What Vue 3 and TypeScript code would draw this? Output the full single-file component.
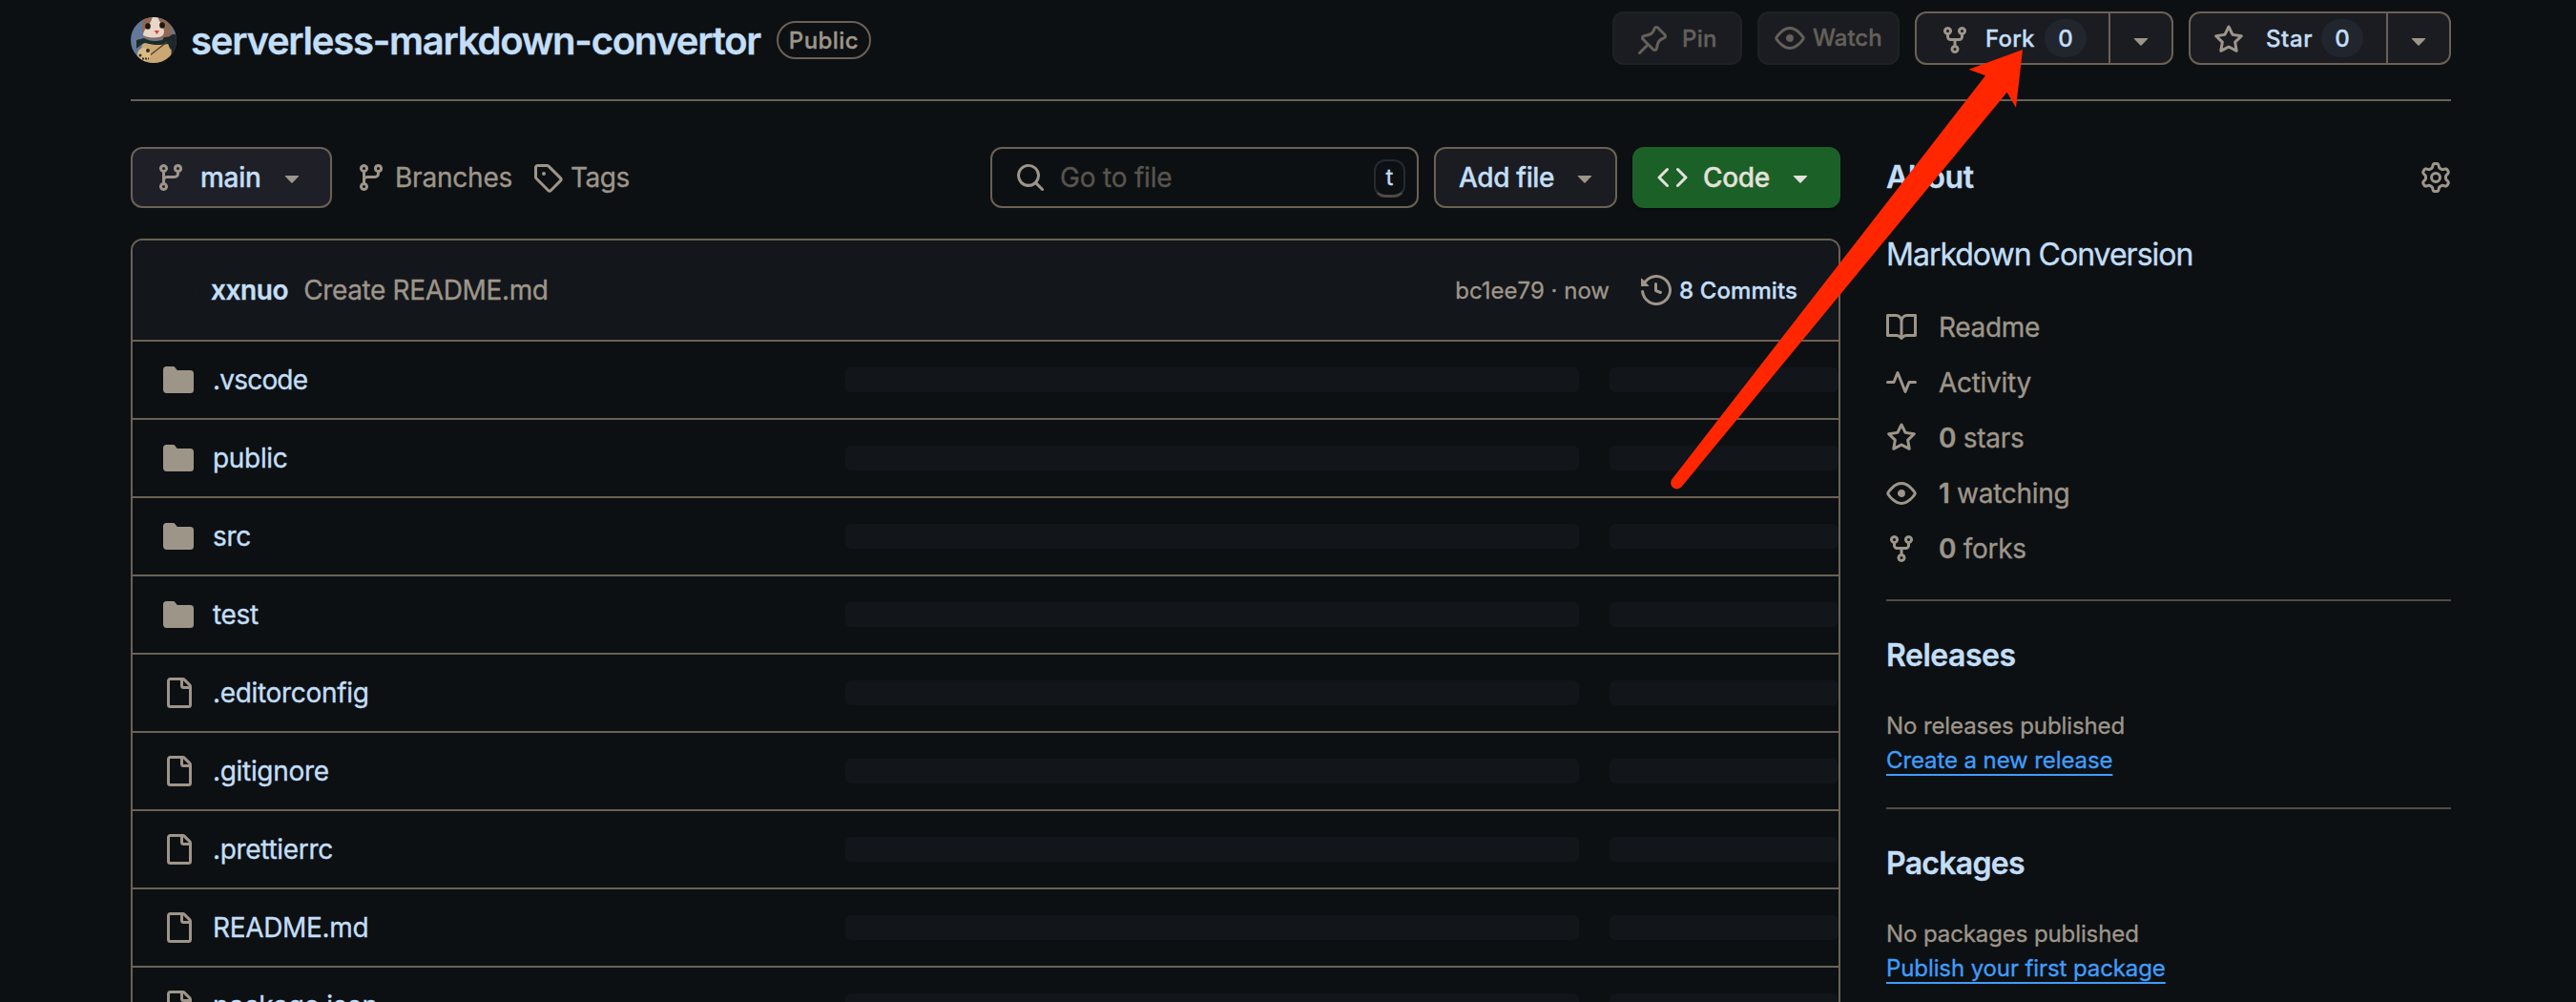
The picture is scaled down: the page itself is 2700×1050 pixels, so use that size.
<script setup lang="ts">
import { h, type FunctionalComponent } from 'vue'

const glyphs = {
  branch:
    'M9.5 3.25a2.25 2.25 0 1 1 3 2.122V6A2.5 2.5 0 0 1 10 8.5H6a1 1 0 0 0-1 1v1.128a2.251 2.251 0 1 1-1.5 0V5.372a2.25 2.25 0 1 1 1.5 0v1.836A2.493 2.493 0 0 1 6 7h4a1 1 0 0 0 1-1v-.628A2.25 2.25 0 0 1 9.5 3.25Zm-6 0a.75.75 0 1 0 1.5 0 .75.75 0 0 0-1.5 0Zm8.25-.75a.75.75 0 1 0 0 1.5.75.75 0 0 0 0-1.5ZM4.25 12a.75.75 0 1 0 0 1.5.75.75 0 0 0 0-1.5Z',
  tag:
    'M1 7.775V2.75C1 1.784 1.784 1 2.75 1h5.025c.464 0 .91.184 1.238.513l6.25 6.25a1.75 1.75 0 0 1 0 2.474l-5.026 5.026a1.75 1.75 0 0 1-2.474 0l-6.25-6.25A1.752 1.752 0 0 1 1 7.775Zm1.5 0c0 .066.026.13.073.177l6.25 6.25a.25.25 0 0 0 .354 0l5.025-5.025a.25.25 0 0 0 0-.354l-6.25-6.25a.25.25 0 0 0-.177-.073H2.75a.25.25 0 0 0-.25.25ZM6 5a1 1 0 1 1 0 2 1 1 0 0 1 0-2Z',
  search:
    'M10.68 11.74a6 6 0 0 1-7.922-8.982 6 6 0 0 1 8.982 7.922l3.04 3.04a.749.749 0 0 1-.326 1.275.749.749 0 0 1-.734-.215ZM11.5 7a4.499 4.499 0 1 0-8.997 0A4.499 4.499 0 0 0 11.5 7Z',
  caret:
    'm4.427 7.427 3.396 3.396a.25.25 0 0 0 .354 0l3.396-3.396A.25.25 0 0 0 11.396 7H4.604a.25.25 0 0 0-.177.427Z',
  code:
    'm11.28 3.22 4.25 4.25a.75.75 0 0 1 0 1.06l-4.25 4.25a.749.749 0 0 1-1.275-.326.749.749 0 0 1 .215-.734L13.94 8l-3.72-3.72a.749.749 0 0 1 .326-1.275.749.749 0 0 1 .734.215Zm-6.56 0a.751.751 0 0 1 1.042.018.751.751 0 0 1 .018 1.042L2.06 8l3.72 3.72a.749.749 0 0 1-.326 1.275.749.749 0 0 1-.734-.215L.47 8.53a.75.75 0 0 1 0-1.06Z',
  history:
    'm.427 1.927 1.215 1.215a8.002 8.002 0 1 1-1.6 5.685.75.75 0 1 1 1.493-.154 6.5 6.5 0 1 0 1.18-4.458l1.358 1.358A.25.25 0 0 1 3.896 6H.25A.25.25 0 0 1 0 5.75V2.104a.25.25 0 0 1 .427-.177ZM7.75 4a.75.75 0 0 1 .75.75v2.992l2.028.812a.75.75 0 0 1-.557 1.392l-2.5-1A.751.751 0 0 1 7 8.25v-3.5A.75.75 0 0 1 7.75 4Z',
  book:
    'M0 1.75A.75.75 0 0 1 .75 1h4.253c1.227 0 2.317.59 3 1.501A3.743 3.743 0 0 1 11.006 1h4.245a.75.75 0 0 1 .75.75v10.5a.75.75 0 0 1-.75.75h-4.507a2.25 2.25 0 0 0-1.591.659l-.622.621a.75.75 0 0 1-1.06 0l-.622-.621A2.25 2.25 0 0 0 5.258 13H.75a.75.75 0 0 1-.75-.75Zm7.251 10.324.004-5.073-.002-2.253A2.25 2.25 0 0 0 5.003 2.5H1.5v9h3.757a3.75 3.75 0 0 1 1.994.574ZM8.755 4.75l-.004 7.322a3.752 3.752 0 0 1 1.992-.572H14.5v-9h-3.495a2.25 2.25 0 0 0-2.25 2.25Z',
  pulse:
    'M6 2c.306 0 .582.187.696.471L10 10.731l1.304-3.26A.751.751 0 0 1 12 7h3.25a.75.75 0 0 1 0 1.5h-2.742l-1.812 4.528a.751.751 0 0 1-1.392 0L6 4.77 4.696 8.03A.75.75 0 0 1 4 8.5H.75a.75.75 0 0 1 0-1.5h2.742l1.812-4.529A.751.751 0 0 1 6 2Z',
  star:
    'M8 .25a.75.75 0 0 1 .673.418l1.882 3.815 4.21.612a.75.75 0 0 1 .416 1.279l-3.046 2.97.719 4.192a.751.751 0 0 1-1.088.791L8 12.347l-3.766 1.98a.75.75 0 0 1-1.088-.79l.72-4.194L.818 6.374a.75.75 0 0 1 .416-1.28l4.21-.611L7.327.668A.75.75 0 0 1 8 .25Zm0 2.445L6.615 5.5a.75.75 0 0 1-.564.41l-3.097.45 2.24 2.184a.75.75 0 0 1 .216.664l-.528 3.084 2.769-1.456a.75.75 0 0 1 .698 0l2.77 1.456-.53-3.084a.75.75 0 0 1 .216-.664l2.24-2.183-3.096-.45a.75.75 0 0 1-.564-.41L8 2.694Z',
  eye:
    'M8 2c1.981 0 3.671.992 4.933 2.078 1.27 1.091 2.187 2.345 2.637 3.023a1.62 1.62 0 0 1 0 1.798c-.45.678-1.367 1.932-2.637 3.023C11.67 13.008 9.981 14 8 14c-1.981 0-3.671-.992-4.933-2.078C1.797 10.83.88 9.576.43 8.898a1.62 1.62 0 0 1 0-1.798c.45-.677 1.367-1.931 2.637-3.022C4.33 2.992 6.019 2 8 2ZM1.679 7.932a.12.12 0 0 0 0 .136c.411.622 1.241 1.75 2.366 2.717C5.176 11.758 6.527 12.5 8 12.5c1.473 0 2.825-.742 3.955-1.715 1.124-.967 1.954-2.096 2.366-2.717a.12.12 0 0 0 0-.136c-.412-.621-1.242-1.75-2.366-2.717C10.824 4.242 9.473 3.5 8 3.5c-1.473 0-2.825.742-3.955 1.715-1.124.967-1.954 2.096-2.366 2.717ZM8 10a2 2 0 1 1-.001-3.999A2 2 0 0 1 8 10Z',
  fork:
    'M5 5.372v.878c0 .414.336.75.75.75h4.5a.75.75 0 0 0 .75-.75v-.878a2.25 2.25 0 1 1 1.5 0v.878a2.25 2.25 0 0 1-2.25 2.25h-1.5v2.128a2.251 2.251 0 1 1-1.5 0V8.5h-1.5A2.25 2.25 0 0 1 3.5 6.25v-.878a2.25 2.25 0 1 1 1.5 0ZM5 3.25a.75.75 0 1 0-1.5 0 .75.75 0 0 0 1.5 0Zm6.75.75a.75.75 0 1 0 0-1.5.75.75 0 0 0 0 1.5Zm-3 8.75a.75.75 0 1 0-1.5 0 .75.75 0 0 0 1.5 0Z',
  pin:
    'm11.294.984 3.722 3.722a1.75 1.75 0 0 1-.504 2.826l-1.327.613a3.089 3.089 0 0 0-1.707 2.084l-.584 2.454c-.317 1.332-1.972 1.8-2.94.832L5.75 11.311 1.78 15.28a.749.749 0 1 1-1.06-1.06l3.969-3.97-2.204-2.204c-.968-.968-.5-2.623.832-2.94l2.454-.584a3.08 3.08 0 0 0 2.084-1.707l.613-1.327a1.75 1.75 0 0 1 2.826-.504ZM6.283 9.723l2.732 2.731a.25.25 0 0 0 .42-.119l.584-2.454a4.586 4.586 0 0 1 2.537-3.098l1.328-.613a.25.25 0 0 0 .072-.404l-3.722-3.722a.25.25 0 0 0-.404.072l-.613 1.328a4.584 4.584 0 0 1-3.098 2.537l-2.454.584a.25.25 0 0 0-.119.42l2.731 2.732Z',
  file:
    'M2 1.75C2 .784 2.784 0 3.75 0h6.586c.464 0 .909.184 1.237.513l2.914 2.914c.329.328.513.773.513 1.237v9.586A1.75 1.75 0 0 1 13.25 16h-9.5A1.75 1.75 0 0 1 2 14.25Zm1.75-.25a.25.25 0 0 0-.25.25v12.5c0 .138.112.25.25.25h9.5a.25.25 0 0 0 .25-.25V6h-2.75A1.75 1.75 0 0 1 9 4.25V1.5Zm6.75.062V4.25c0 .138.112.25.25.25h2.688l-.011-.013-2.914-2.914-.013-.011Z',
  folder:
    'M1.75 1A1.75 1.75 0 0 0 0 2.75v10.5C0 14.216.784 15 1.75 15h12.5A1.75 1.75 0 0 0 16 13.25v-8.5A1.75 1.75 0 0 0 14.25 3H7.5a.25.25 0 0 1-.2-.1l-.9-1.2C6.07 1.26 5.55 1 5 1H1.75Z',
  gear:
    'M8 0a8.2 8.2 0 0 1 .701.031C9.444.095 9.99.645 10.16 1.29l.288 1.107c.018.066.079.158.212.224.231.114.454.243.668.386.123.082.233.09.299.071l1.103-.303c.644-.176 1.392.021 1.82.63.27.385.506.792.704 1.218.315.675.111 1.422-.364 1.891l-.814.806c-.049.048-.098.147-.088.294.016.257.016.515 0 .772-.01.147.038.246.088.294l.814.806c.475.469.679 1.216.364 1.891a7.977 7.977 0 0 1-.704 1.217c-.428.61-1.176.807-1.82.63l-1.102-.302c-.067-.019-.177-.011-.3.071a5.909 5.909 0 0 1-.668.386c-.133.066-.194.158-.211.224l-.29 1.106c-.168.646-.715 1.196-1.458 1.26a8.006 8.006 0 0 1-1.402 0c-.743-.064-1.289-.614-1.458-1.26l-.289-1.106c-.018-.066-.079-.158-.212-.224a5.738 5.738 0 0 1-.668-.386c-.123-.082-.233-.09-.299-.071l-1.103.303c-.644.176-1.392-.021-1.82-.63a8.12 8.12 0 0 1-.704-1.218c-.315-.675-.111-1.422.363-1.891l.815-.806c.05-.048.098-.147.088-.294a6.214 6.214 0 0 1 0-.772c.01-.147-.038-.246-.088-.294l-.815-.806C.635 6.045.431 5.298.746 4.623a7.92 7.92 0 0 1 .704-1.217c.428-.61 1.176-.807 1.82-.63l1.102.302c.067.019.177.011.3-.071.214-.143.437-.272.668-.386.133-.066.194-.158.211-.224l.29-1.106C6.009.645 6.556.095 7.299.03 7.53.01 7.764 0 8 0Zm-.571 1.525c-.036.003-.108.036-.137.146l-.289 1.105c-.147.561-.549.967-.998 1.189-.173.086-.34.183-.5.29-.417.278-.97.423-1.529.27l-1.103-.303c-.109-.03-.175.016-.195.045-.22.312-.412.644-.573.99-.014.031-.021.11.059.19l.815.806c.411.406.562.957.53 1.456a4.709 4.709 0 0 0 0 .582c.032.499-.119 1.05-.53 1.456l-.815.806c-.081.08-.073.159-.059.19.162.346.353.677.573.989.02.03.085.076.195.046l1.102-.303c.56-.153 1.113-.008 1.53.27.161.107.328.204.501.29.447.222.85.629.997 1.189l.289 1.105c.029.109.101.143.137.146a6.6 6.6 0 0 0 1.142 0c.036-.003.108-.036.137-.146l.289-1.105c.147-.561.549-.967.998-1.189.173-.086.34-.183.5-.29.417-.278.97-.423 1.529-.27l1.103.303c.109.029.175-.016.195-.045.22-.313.411-.644.573-.99.014-.031.021-.11-.059-.19l-.815-.806c-.411-.406-.562-.957-.53-1.456a4.709 4.709 0 0 0 0-.582c-.032-.499.119-1.05.53-1.456l.815-.806c.081-.08.073-.159.059-.19a6.464 6.464 0 0 0-.573-.989c-.02-.03-.085-.076-.195-.046l-1.102.303c-.56.153-1.113.008-1.53-.27a4.44 4.44 0 0 0-.501-.29c-.447-.222-.85-.629-.997-1.189l-.289-1.105c-.029-.11-.101-.143-.137-.146a6.6 6.6 0 0 0-1.142 0ZM11 8a3 3 0 1 1-6 0 3 3 0 0 1 6 0ZM9.5 8a1.5 1.5 0 1 0-3.001.001A1.5 1.5 0 0 0 9.5 8Z',
} as const

type Glyph = keyof typeof glyphs

const Icon: FunctionalComponent<{ name: Glyph }> = (props) =>
  h('svg', { width: 32, height: 32, viewBox: '0 0 16 16', fill: 'currentColor', 'aria-hidden': 'true' }, [
    h('path', { d: glyphs[props.name] }),
  ])
Icon.props = ['name']

interface Entry {
  name: string
  kind: 'folder' | 'file'
}

const entries: Entry[] = [
  { name: '.vscode', kind: 'folder' },
  { name: 'public', kind: 'folder' },
  { name: 'src', kind: 'folder' },
  { name: 'test', kind: 'folder' },
  { name: '.editorconfig', kind: 'file' },
  { name: '.gitignore', kind: 'file' },
  { name: '.prettierrc', kind: 'file' },
  { name: 'README.md', kind: 'file' },
  { name: 'package.json', kind: 'file' },
]

interface Fact {
  icon: Glyph
  count?: number
  label: string
}

const facts: Fact[] = [
  { icon: 'book', label: 'Readme' },
  { icon: 'pulse', label: 'Activity' },
  { icon: 'star', count: 0, label: 'stars' },
  { icon: 'eye', count: 1, label: 'watching' },
  { icon: 'fork', count: 0, label: 'forks' },
]

const sections = [
  { title: 'Releases', note: 'No releases published', link: 'Create a new release' },
  { title: 'Packages', note: 'No packages published', link: 'Publish your first package' },
]
</script>

<template>
  <div class="page">
    <header class="repo-head">
      <div class="repo-title">
        <svg class="avatar" width="48" height="48" viewBox="0 0 48 48">
          <defs>
            <clipPath id="avatar-clip"><circle cx="24" cy="24" r="24" /></clipPath>
          </defs>
          <g clip-path="url(#avatar-clip)">
            <rect width="48" height="48" fill="#64799a" />
            <path d="M34 18h14v30H34z" fill="#20242a" />
            <path d="M13 26c-3 8-3 16 1 22h26c4-8 3-17 0-22z" fill="#c9a873" />
            <path d="M6 24l8-2c7 4 15 4 24 0l8 4-4 8c-2-2-2-5-3-6-8 2-17 1-24-1-4 1-6 4-9 6z" fill="#1c2a29" />
            <path d="M13-1h23c2 6 8 10 8 18-2 3-5 4-8 4-6 3-15 3-22 0-2-3-3-14-1-22z" fill="#8d6a55" />
            <path d="M23-1h5c1 5 5 8 6 12 2 5 1 9-5 10-6 1-13 0-16-2 0-7 8-10 10-20z" fill="#e8d6c8" />
            <ellipse cx="18" cy="9.500" rx="2.800" ry="3.200" fill="#24140f" />
            <ellipse cx="33" cy="8.500" rx="2.800" ry="3.200" fill="#24140f" />
            <path d="M24.500 14h5.500l-2.500 4z" fill="#d8404a" />
            <path d="M38 26L20 40" stroke="#4c3a26" stroke-width="1.200" />
            <circle cx="14" cy="39" r="7" fill="#dabb82" />
            <circle cx="18" cy="35" r="2" fill="#33291f" />
            <circle cx="10" cy="40" r="1.500" fill="#33291f" />
            <path d="M12 43.500h7" stroke="#33291f" stroke-width="2" stroke-dasharray="2 1" />
          </g>
        </svg>
        <h1>serverless-markdown-convertor</h1>
        <span class="pill">Public</span>
      </div>
      <div class="actions">
        <button class="btn disabled pin"><Icon name="pin" class="low" /><span>Pin</span></button>
        <button class="btn disabled watch"><Icon name="eye" /><span>Watch</span></button>
        <div class="group fork">
          <button class="group-main"><Icon name="fork" class="low" /><span>Fork</span><b class="counter">0</b></button>
          <button class="group-caret"><Icon name="caret" class="low" /></button>
        </div>
        <div class="group star">
          <button class="group-main"><Icon name="star" class="low" /><span>Star</span><b class="counter">0</b></button>
          <button class="group-caret"><Icon name="caret" class="low" /></button>
        </div>
      </div>
    </header>

    <main class="columns">
      <section>
        <div class="toolbar">
          <button class="btn branch"><Icon name="branch" /><span>main</span><Icon name="caret" /></button>
          <a class="nav-link branches"><Icon name="branch" /><span>Branches</span></a>
          <a class="nav-link tags"><Icon name="tag" /><span>Tags</span></a>
          <div class="search"><Icon name="search" /><span>Go to file</span><kbd>t</kbd></div>
          <button class="btn add"><span>Add file</span><Icon name="caret" /></button>
          <button class="btn code"><Icon name="code" /><span>Code</span><Icon name="caret" /></button>
        </div>

        <div class="files">
          <div class="commit">
            <i class="commit-avatar"></i>
            <strong>xxnuo</strong>
            <span class="message">Create README.md</span>
            <span class="hash">bc1ee79 · now</span>
            <Icon name="history" />
            <span class="count">8 Commits</span>
          </div>
          <div v-for="entry in entries" :key="entry.name" class="row">
            <div class="name">
              <Icon :name="entry.kind" />
              <span :class="{ tight: entry.name === '.vscode' }">{{ entry.name }}</span>
            </div>
            <i class="skeleton message-skeleton"></i>
            <i class="skeleton date-skeleton"></i>
          </div>
        </div>
      </section>

      <aside>
        <div class="about">
          <h2>About</h2>
          <Icon name="gear" />
        </div>
        <p class="description">Markdown Conversion</p>
        <ul class="facts">
          <li v-for="fact in facts" :key="fact.label">
            <Icon :name="fact.icon" />
            <span><b v-if="fact.count !== undefined">{{ fact.count }}</b> {{ fact.label }}</span>
          </li>
        </ul>
        <section v-for="section in sections" :key="section.title" class="side-section">
          <h2 :class="section.title.toLowerCase()">{{ section.title }}</h2>
          <p>{{ section.note }}</p>
          <p><a>{{ section.link }}</a></p>
        </section>
      </aside>
    </main>

    <svg class="pointer" width="376" height="466" viewBox="0 0 376 466" aria-hidden="true">
      <path d="M372 2L315.500 22.700L333 29.300L4.600 452A6.200 6.200 0 0 0 14.600 460L355.600 46.700L365 62.700Z" fill="#ff2600" />
    </svg>
  </div>
</template>

<style>
html,
body {
  background: #0c1013;
}
</style>

<style scoped>
.page {
  box-sizing: border-box;
  position: relative;
  width: 2700px;
  height: 1050px;
  padding: 0 131px 0 137px;
  overflow: hidden;
  background: #0c1013;
  color: #c3def6;
  font-family: Inter, "Liberation Sans", sans-serif;
  font-size: 28px;
  font-weight: 400;
  white-space: nowrap;
  -webkit-text-stroke: 0.35px currentColor;
}

.page *,
.page svg {
  box-sizing: border-box;
}

svg {
  flex: none;
  display: block;
  color: #9e9589;
}

h1,
h2,
p,
ul {
  margin: 0;
  padding: 0;
  font-weight: inherit;
}

button {
  margin: 0;
  padding: 0;
  border: 0;
  background: none;
  color: inherit;
  font: inherit;
  font-weight: 500;
  text-align: left;
}

/* Header */
.repo-head {
  display: flex;
  justify-content: space-between;
  height: 106px;
  padding-top: 12px;
  border-bottom: 2px solid #6b6154;
}

.repo-title {
  display: flex;
  align-items: center;
  height: 60px;
}

.repo-title h1 {
  width: 614px;
  margin-top: 1px;
  margin-left: 15px;
  font-size: 40px;
  font-weight: 600;
  line-height: 48px;
  letter-spacing: -1.24px;
}

.pill {
  width: 99px;
  height: 40px;
  border: 2px solid #6b6154;
  border-radius: 20px;
  color: #9e9589;
  font-size: 24px;
  font-weight: 500;
  line-height: 37px;
  letter-spacing: 0.45px;
  text-align: center;
}

.actions {
  display: flex;
  gap: 16px;
  height: 56px;
  font-size: 24px;
}

.btn {
  display: flex;
  align-items: center;
  border: 2px solid #6b6154;
  border-radius: 12px;
  background: #1a1c21;
}

.low {
  position: relative;
  top: 2px;
}

.disabled {
  border-color: #1e2224;
  color: #65605a;
}

.disabled svg {
  color: #65605a;
}

.pin {
  width: 136px;
  padding-left: 24px;
  gap: 15px;
  letter-spacing: 0.3px;
}

.watch {
  width: 149px;
  padding-left: 16px;
  gap: 8px;
}

.watch span {
  margin-top: -2px;
}

.group {
  display: flex;
  border: 2px solid #6b6154;
  border-radius: 12px;
  background: #1a1c21;
}

.group.fork {
  width: 271px;
}

.group.star {
  width: 275px;
}

.group-main {
  display: flex;
  flex: 1;
  align-items: center;
  padding: 0 23px 0 24px;
  letter-spacing: 0.2px;
}

.star .group-main {
  padding-right: 24px;
  letter-spacing: 0.6px;
}

.group-main span {
  margin-left: 16px;
}

.star .group-main span {
  margin-left: 23px;
}

.counter {
  flex: none;
  width: 44px;
  height: 40px;
  margin-left: auto;
  border-radius: 20px;
  background: #21252e;
  font-weight: 500;
  line-height: 41px;
  letter-spacing: 0;
  text-align: center;
}

.group-caret {
  display: flex;
  align-items: center;
  justify-content: center;
  width: 66px;
  border-left: 2px solid #6b6154;
}

/* Columns */
.columns {
  display: grid;
  grid-template-columns: 1792px 592px;
  column-gap: 48px;
  margin-top: 48px;
}

.toolbar {
  display: flex;
  height: 64px;
}

.branch {
  width: 211px;
  padding-left: 24px;
  background: #1e1f27;
}

.branch span {
  width: 64px;
  margin: 0 16px 0 15px;
  letter-spacing: -0.3px;
}

.nav-link {
  display: flex;
  align-items: center;
  gap: 9px;
  color: #9e9589;
  letter-spacing: -0.2px;
}

.branches {
  width: 185px;
  margin-left: 25px;
}

.tags {
  gap: 8px;
  letter-spacing: -0.5px;
}

.search {
  display: flex;
  align-items: center;
  width: 449px;
  margin-left: auto;
  padding: 0 12px 0 24px;
  border: 2px solid #6b6154;
  border-radius: 12px;
  color: #59544d;
}

.search span {
  margin-left: 15px;
  letter-spacing: -0.2px;
}

kbd {
  width: 33px;
  height: 40px;
  margin: 2px 0 0 auto;
  border: 2px solid #262a31;
  border-bottom: 3px solid #4f4a42;
  border-radius: 12px;
  color: #c3def6;
  font-family: Inter, "Liberation Sans", sans-serif;
  font-size: 24px;
  line-height: 33px;
  text-align: center;
}

.add {
  width: 192px;
  margin-left: 16px;
  padding-left: 24px;
  letter-spacing: -0.35px;
}

.add span {
  width: 101px;
  margin-right: 15px;
}

.code {
  width: 218px;
  margin-left: 16px;
  padding-left: 24px;
  border-color: #1c6128;
  background: #1b6026;
  box-shadow: 0 2px 2px rgba(0, 0, 0, 0.3);
  color: #e4e1dc;
}

.code svg {
  color: #e4e1dc;
}

.code span {
  width: 70px;
  margin: 0 16px;
  letter-spacing: -0.3px;
}

/* File list */
.files {
  margin-top: 32px;
  border: 2px solid #6b6154;
  border-radius: 12px;
  overflow: hidden;
}

.commit {
  display: flex;
  align-items: center;
  height: 104px;
  padding: 0 42px 0 28px;
  background: #13161b;
}

.commit-avatar {
  width: 40px;
  height: 40px;
  border: 1px solid #15181b;
  border-radius: 50%;
}

.commit strong {
  margin: 0 16px 0 14px;
  font-weight: 600;
  letter-spacing: -0.4px;
}

.message {
  color: #9e9589;
  letter-spacing: -0.36px;
}

.hash {
  margin: 0 33px 0 auto;
  color: #9e9589;
  font-size: 24px;
}

.count {
  width: 125px;
  margin-left: 8px;
  font-size: 24px;
  font-weight: 500;
  letter-spacing: 0.1px;
}

.row {
  display: flex;
  align-items: center;
  height: 82px;
  border-top: 2px solid #6b6154;
}

.name {
  display: flex;
  align-items: center;
  gap: 20px;
  width: 747px;
  padding-left: 32px;
  letter-spacing: -0.32px;
}

.tight {
  letter-spacing: -0.8px;
}

.skeleton {
  height: 26px;
  border-radius: 6px;
  background: #121519;
}

.message-skeleton {
  width: 769px;
  margin-right: 32px;
}

.date-skeleton {
  width: 240px;
}

/* Sidebar */
.about {
  display: flex;
  align-items: center;
  justify-content: space-between;
  height: 64px;
}

h2 {
  font-size: 32px;
  font-weight: 600;
  line-height: 50px;
  letter-spacing: -0.4px;
}

.releases {
  height: 48px;
  letter-spacing: -0.5px;
}

.packages {
  height: 48px;
  letter-spacing: -0.7px;
}

.description {
  height: 48px;
  margin-top: 24px;
  font-size: 32px;
  line-height: 50px;
  letter-spacing: -1px;
}

.facts {
  display: flex;
  flex-direction: column;
  gap: 26px;
  margin: 37px 0;
  color: #9e9589;
  list-style: none;
}

.facts li {
  display: flex;
  align-items: center;
  gap: 23px;
  height: 32px;
  letter-spacing: -0.3px;
}

.facts b {
  font-weight: 600;
}

.side-section {
  padding: 32px 0;
  border-top: 2px solid #524b40;
}

.side-section p {
  height: 36px;
  color: #9e9589;
  font-size: 24px;
  line-height: 38px;
  letter-spacing: -0.1px;
}

.side-section h2 + p {
  margin-top: 32px;
}

.side-section a {
  color: #419cfa;
  text-decoration: underline;
  text-decoration-skip-ink: none;
  text-decoration-thickness: 2px;
  text-underline-offset: 6px;
}

/* Annotation arrow laid over the page */
.pointer {
  position: absolute;
  top: 50px;
  left: 1748px;
}
</style>
